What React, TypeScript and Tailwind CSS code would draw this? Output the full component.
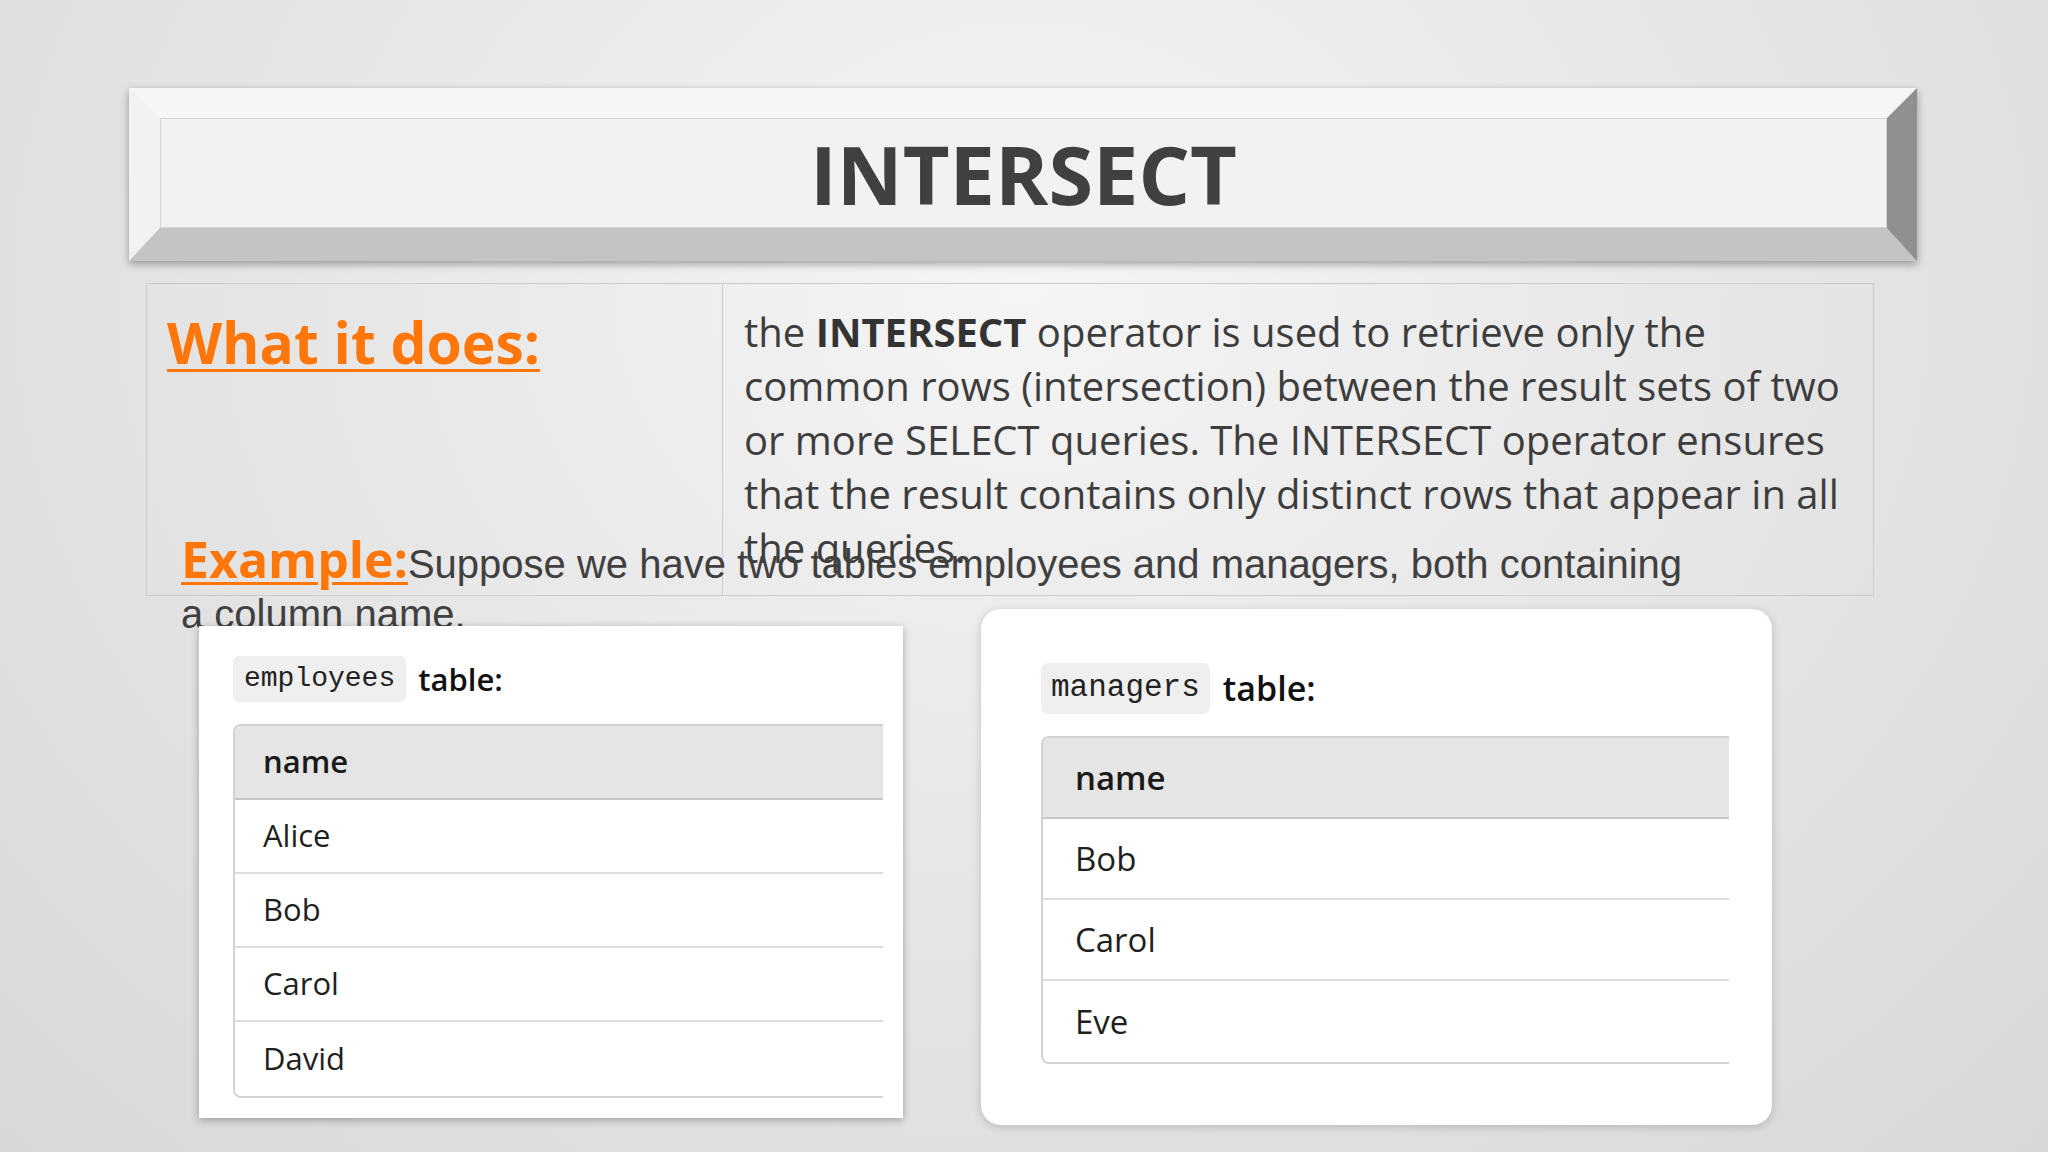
const employees = ["Alice", "Bob", "Carol", "David"];
const managers = ["Bob", "Carol", "Eve"];

function NameTable({ rows, big }: { rows: string[]; big?: boolean }) {
  const rowH = big ? "h-[81px]" : "h-[74px]";
  const text = big ? "text-[33px] pl-[32px]" : "text-[31px] pl-[28px]";
  return (
    <div className="border-2 border-r-0 border-[#d2d2d2] rounded-l-[8px] overflow-hidden">
      <div className={`${rowH} ${text} flex items-center bg-[#e5e5e5] border-b-2 border-[#c6c6c6] font-semibold text-[#1a1a1a]`}>
        name
      </div>
      {rows.map((r, i) => (
        <div
          key={r}
          className={`${rowH} ${text} flex items-center bg-white text-[#1f1f1f] ${i < rows.length - 1 ? "border-b-2 border-[#dddddd]" : ""}`}
        >
          {r}
        </div>
      ))}
    </div>
  );
}

export default function App() {
  return (
    <div className="w-[2048px] h-[1152px] overflow-hidden pt-[88px] font-['Open_Sans',sans-serif] bg-[radial-gradient(ellipse_at_50%_25%,#f5f5f5_0%,#e6e6e6_50%,#d8d8d8_100%)]">
      {/* beveled title bar */}
      <div className="ml-[129px] w-[1788px] h-[173px] border-solid border-t-[30px] border-l-[31px] border-r-[30px] border-b-[33px] border-t-[#f6f6f6] border-l-[#f2f2f2] border-r-[#8f8f8f] border-b-[#c4c4c4] shadow-[0_3px_8px_rgba(0,0,0,0.35)]">
        <div className="w-full h-full bg-[#f2f2f2] border border-[#d4d4d4] flex items-center justify-center">
          <h1 className="text-[81px] leading-none font-bold text-[#404040]">INTERSECT</h1>
        </div>
      </div>

      {/* what it does */}
      <div className="mt-[22px] ml-[146px] w-[1728px] h-[313px] border border-[#cbcbcb] flex">
        <div className="w-[576px] border-r border-[#cbcbcb] pl-[20px] pt-[18px]">
          <h2 className="text-[57px] leading-[80px] font-bold text-[#ff770a] underline decoration-[3px] underline-offset-[5px]">
            What it does:
          </h2>
        </div>
        <div className="flex-1 pl-[21px] pr-[20px] pt-[21px]">
          <p className="text-[40px] leading-[54px] text-[#3d3d3d]">
            the <b className="font-bold text-[#333333]">INTERSECT</b> operator is used to retrieve only the common rows
            (intersection) between the result sets of two or more SELECT queries. The INTERSECT operator ensures that
            the result contains only distinct rows that appear in all the queries.
          </p>
        </div>
      </div>

      {/* example */}
      <p className="mt-[-62px] ml-[181px] w-[1510px] text-[40px] leading-[50px] text-[#404040] font-['Liberation_Sans',Arial,sans-serif]">
        <span className="font-['Open_Sans',sans-serif] text-[50px] leading-[50px] font-bold text-[#ff770a] underline decoration-[3px] underline-offset-[4px]">
          Example:
        </span>
        Suppose we have two tables employees and managers, both containing a column name.
      </p>

      {/* tables */}
      <div className="mt-[-30px] flex items-start">
        <div className="relative mt-[17px] ml-[199px] w-[704px] h-[492px] bg-white shadow-[0_2px_8px_rgba(0,0,0,0.3)] pl-[34px] pr-[20px] pt-[30px]">
          <div className="flex items-center gap-[12px]">
            <span className="h-[46px] px-[11px] flex items-center rounded-[6px] bg-[#efefef] text-[28px] text-[#222] font-['Liberation_Mono',monospace]">
              employees
            </span>
            <span className="text-[31px] font-semibold text-[#111]">table:</span>
          </div>
          <div className="mt-[21px]">
            <NameTable rows={employees} />
          </div>
        </div>

        <div className="relative ml-[78px] w-[791px] h-[516px] bg-white rounded-[20px] shadow-[0_2px_10px_rgba(0,0,0,0.18)] pl-[60px] pr-[43px] pt-[54px]">
          <div className="flex items-center gap-[13px]">
            <span className="h-[51px] px-[10px] flex items-center rounded-[7px] bg-[#efefef] text-[31px] text-[#222] font-['Liberation_Mono',monospace]">
              managers
            </span>
            <span className="text-[34px] font-semibold text-[#111]">table:</span>
          </div>
          <div className="mt-[22px]">
            <NameTable rows={managers} big />
          </div>
        </div>
      </div>
    </div>
  );
}
